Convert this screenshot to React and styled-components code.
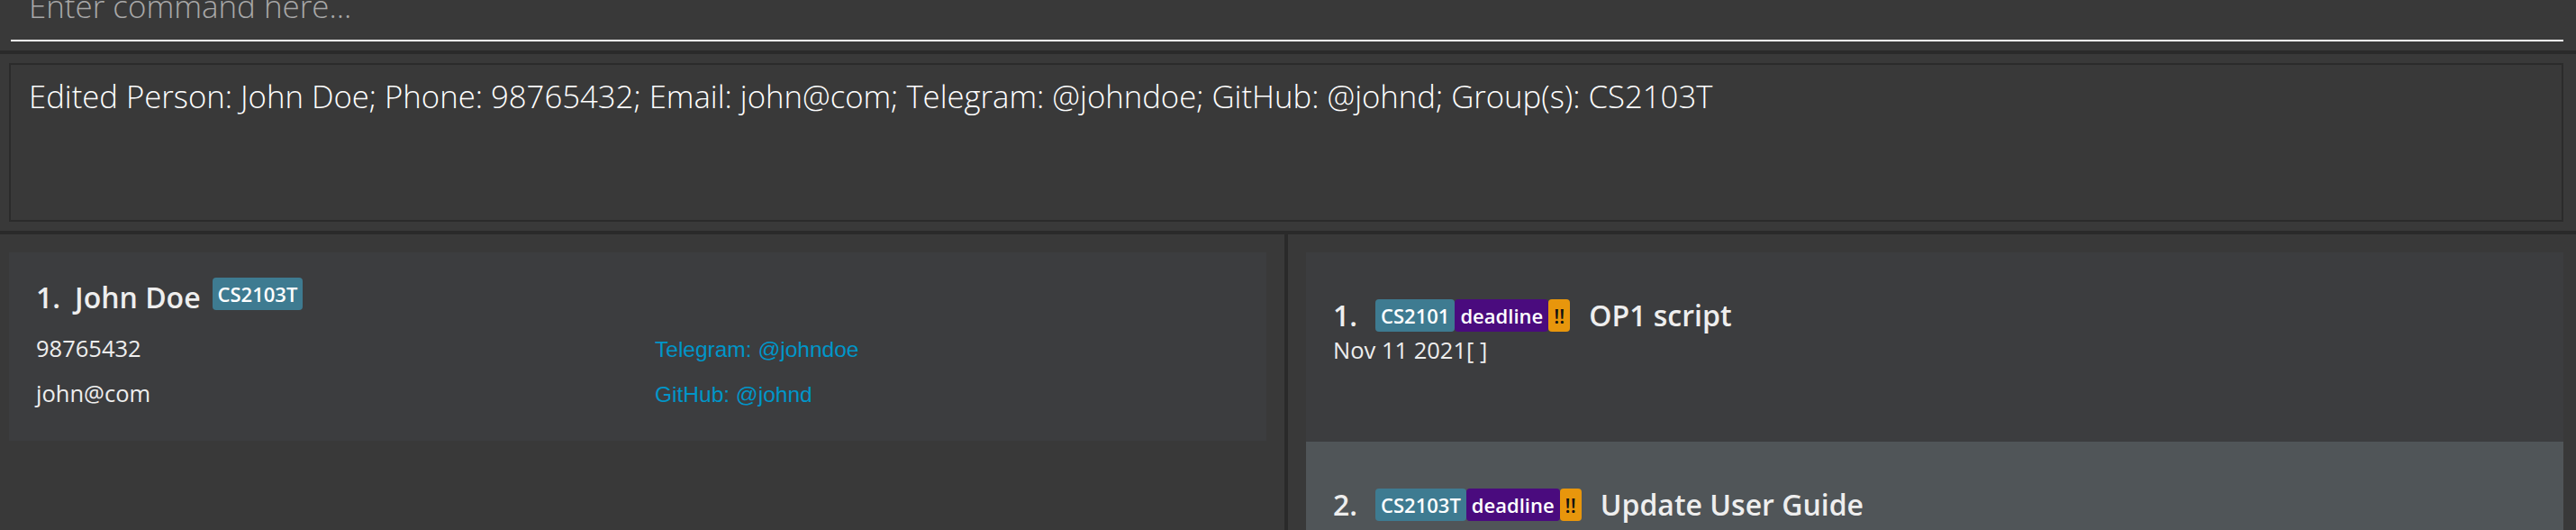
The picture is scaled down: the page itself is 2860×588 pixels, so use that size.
import React from 'react'
import styled, { createGlobalStyle } from 'styled-components'

const GlobalStyle = createGlobalStyle`
  html, body {
    margin: 0;
    padding: 0;
    background: #393939;
  }
  body {
    font-family: "Open Sans", "Liberation Sans", sans-serif;
    overflow: hidden;
  }
`

const Window = styled.div`
  width: 2860px;
  height: 588px;
  display: flex;
  flex-direction: column;
  background: #393939;
  overflow: hidden;
`

const CommandBar = styled.div`
  flex-shrink: 0;
  height: 56px;
  box-sizing: border-box;
  padding: 0 14px 0 12px;
`

const CommandField = styled.div`
  height: 46px;
  box-sizing: border-box;
  border-bottom: 2px solid #ffffff;
  padding-left: 20px;
  font-size: 34.9px;
  font-weight: 300;
  line-height: 14px;
  color: #a8a8a8;
  white-space: nowrap;
`

const Divider = styled.div`
  flex-shrink: 0;
  height: 4px;
  background: #2a2a2a;
`

const ResultSection = styled.div`
  flex-shrink: 0;
  height: 196px;
  box-sizing: border-box;
  padding: 10px 14px 10px 10px;
`

const ResultBox = styled.div`
  height: 100%;
  box-sizing: border-box;
  border: 2px solid #2b2b2b;
  padding: 11px 20px;
  font-size: 34.7px;
  font-weight: 300;
  color: #ffffff;
  white-space: nowrap;
`

const Panes = styled.div`
  flex: 1;
  display: flex;
  min-height: 0;
`

const LeftPane = styled.div`
  width: 1426px;
  flex-shrink: 0;
  box-sizing: border-box;
  padding: 20px 20px 0 10px;
`

const SplitBar = styled.div`
  width: 4px;
  flex-shrink: 0;
  background: #2a2a2a;
`

const RightPane = styled.div`
  flex: 1;
  box-sizing: border-box;
  padding: 20px 14px 0 20px;
  overflow: hidden;
`

const Card = styled.div`
  height: ${p => p.$h}px;
  box-sizing: border-box;
  padding: ${p => p.$top}px 30px 0 30px;
  background: ${p => (p.$selected ? '#505558' : '#3c3d3f')};
  color: #eeeeee;
`

const TitleRow = styled.div`
  display: flex;
  align-items: ${p => p.$align || 'center'};
`

const Index = styled.span`
  font-size: 32px;
  font-weight: 600;
  margin-right: ${p => p.$gap}px;
`

const Title = styled.span`
  font-size: 32px;
  font-weight: 600;
  margin-right: 13px;
  white-space: nowrap;
`

const Tags = styled.div`
  display: flex;
  margin-right: ${p => p.$gap || 0}px;
`

const Tag = styled.span`
  display: inline-block;
  height: 36px;
  line-height: 36px;
  padding: 0 6px;
  box-sizing: border-box;
  font-size: 22px;
  font-weight: 600;
  border-radius: 4px;
  white-space: nowrap;
  background: ${p => p.$bg};
  color: ${p => p.$fg || '#ffffff'};
`

const Details = styled.div`
  display: grid;
  grid-template-columns: 687px 1fr;
  row-gap: 16px;
  align-items: baseline;
  margin-top: 18px;
`

const Small = styled.span`
  font-size: 25.5px;
  color: #eeeeee;
`

const Link = styled.span`
  font-family: "Liberation Sans", Arial, sans-serif;
  font-size: 24.5px;
  color: #0096c9;
`

const DateLine = styled.div`
  font-size: 25.5px;
  color: #eeeeee;
  margin-top: 0;
`

const tagColors = {
  module: '#3e7b91',
  deadline: '#4a0b7e',
  urgent: '#e8960c',
}

const tasks = [
  { id: 1, module: 'CS2101', type: 'deadline', title: 'OP1 script', date: 'Nov 11 2021[ ]' },
  { id: 2, module: 'CS2103T', type: 'deadline', title: 'Update User Guide', date: 'Nov 04 2021[ ]', selected: true },
]

function TaskCard({ task }) {
  return (
    <Card $h={210} $top={48} $selected={task.selected}>
      <TitleRow>
        <Index $gap={20}>{task.id}.</Index>
        <Tags $gap={21}>
          <Tag $bg={tagColors.module}>{task.module}</Tag>
          <Tag $bg={tagColors.deadline}>{task.type}</Tag>
          <Tag $bg={tagColors.urgent} $fg="#111111">!!</Tag>
        </Tags>
        <Title>{task.title}</Title>
      </TitleRow>
      <DateLine>{task.date}</DateLine>
    </Card>
  )
}

export default function App() {
  return (
    <Window>
      <GlobalStyle />
      <CommandBar>
        <CommandField>Enter command here...</CommandField>
      </CommandBar>
      <Divider />
      <ResultSection>
        <ResultBox>
          Edited Person: John Doe; Phone: 98765432; Email: john@com; Telegram: @johndoe; GitHub: @johnd; Group(s): CS2103T
        </ResultBox>
      </ResultSection>
      <Divider />
      <Panes>
        <LeftPane>
          <Card $h={209} $top={28}>
            <TitleRow $align="flex-start">
              <Index $gap={16}>1.</Index>
              <Title>John Doe</Title>
              <Tag $bg={tagColors.module}>CS2103T</Tag>
            </TitleRow>
            <Details>
              <Small>98765432</Small>
              <Link>Telegram: @johndoe</Link>
              <Small>john@com</Small>
              <Link>GitHub: @johnd</Link>
            </Details>
          </Card>
        </LeftPane>
        <SplitBar />
        <RightPane>
          {tasks.map(t => (
            <TaskCard key={t.id} task={t} />
          ))}
        </RightPane>
      </Panes>
    </Window>
  )
}
